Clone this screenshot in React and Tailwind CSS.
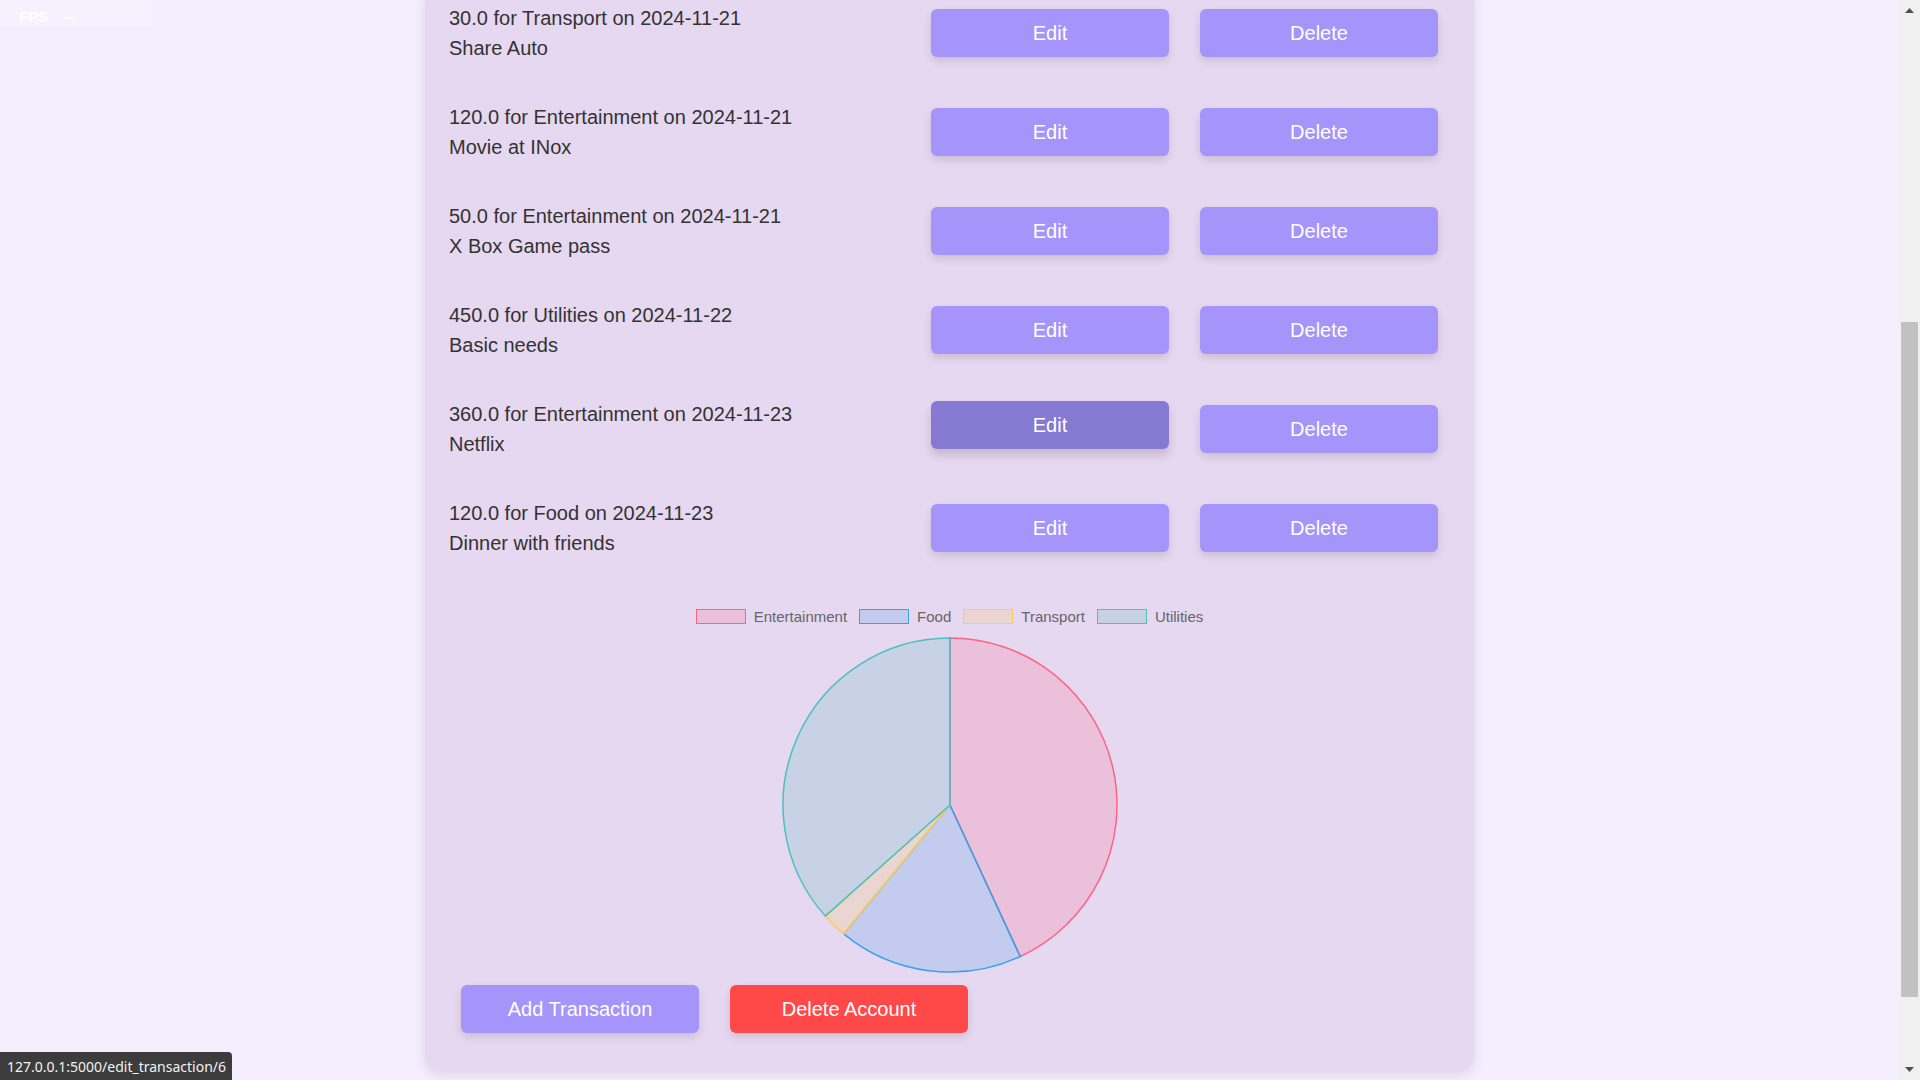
import React from "react";

const transactions = [
  { amount: "30.0", category: "Transport", date: "2024-11-21", note: "Share Auto" },
  { amount: "120.0", category: "Entertainment", date: "2024-11-21", note: "Movie at INox" },
  { amount: "50.0", category: "Entertainment", date: "2024-11-21", note: "X Box Game pass" },
  { amount: "450.0", category: "Utilities", date: "2024-11-22", note: "Basic needs" },
  { amount: "360.0", category: "Entertainment", date: "2024-11-23", note: "Netflix", hover: true },
  { amount: "120.0", category: "Food", date: "2024-11-23", note: "Dinner with friends" },
];

const slices = [
  { label: "Entertainment", value: 530, fill: "rgba(255,99,132,0.2)", stroke: "rgb(255,99,132)" },
  { label: "Food", value: 220, fill: "rgba(54,162,235,0.2)", stroke: "rgb(54,162,235)" },
  { label: "Transport", value: 30, fill: "rgba(255,205,86,0.2)", stroke: "rgb(255,205,86)" },
  { label: "Utilities", value: 450, fill: "rgba(75,192,192,0.2)", stroke: "rgb(75,192,192)" },
];

function PieChart() {
  const total = slices.reduce((s, d) => s + d.value, 0);
  const cx = 168;
  const cy = 168;
  const r = 167;
  let start = -Math.PI / 2;
  const paths = slices.map((d) => {
    const end = start + (d.value / total) * Math.PI * 2;
    const x1 = cx + r * Math.cos(start);
    const y1 = cy + r * Math.sin(start);
    const x2 = cx + r * Math.cos(end);
    const y2 = cy + r * Math.sin(end);
    const large = end - start > Math.PI ? 1 : 0;
    start = end;
    return {
      ...d,
      d: `M ${cx} ${cy} L ${x1} ${y1} A ${r} ${r} 0 ${large} 1 ${x2} ${y2} Z`,
    };
  });

  return (
    <svg width="336" height="336" viewBox="0 0 336 336">
      {paths.map((p) => (
        <path key={p.label} d={p.d} fill={p.fill} stroke={p.stroke} strokeWidth="1.5" strokeLinejoin="round" />
      ))}
    </svg>
  );
}

function Legend() {
  return (
    <div className="flex items-center justify-center gap-[12px] h-[16px] text-[15px] leading-[15px] text-[#666666]">
      {slices.map((s) => (
        <div key={s.label} className="flex items-center gap-[8px]">
          <span
            className="block w-[50px] h-[15px] border-[1.5px]"
            style={{ backgroundColor: s.fill, borderColor: s.stroke }}
          />
          <span>{s.label}</span>
        </div>
      ))}
    </div>
  );
}

function Btn({ children, hover, red }) {
  const base =
    "w-[238px] h-[48px] rounded-[6px] text-[20px] text-white flex items-center justify-center shadow-[0_4px_8px_rgba(0,0,0,0.12)]";
  let color = "bg-[#a594f9]";
  if (hover) color = "bg-[#8579d1] -translate-y-[4px] shadow-[0_6px_10px_rgba(0,0,0,0.15)]";
  if (red) color = "bg-[#ff4848]";
  return <button className={`${base} ${color}`}>{children}</button>;
}

export default function App() {
  return (
    <div
      className="relative flex h-[1080px] w-[1920px] overflow-hidden bg-[#f5eefe] text-[#333333]"
      style={{ fontFamily: '"Liberation Sans", Arial, sans-serif' }}
    >
      <div className="flex-1 overflow-hidden">
        <div className="mx-auto -mt-[16px] w-[1049px] rounded-[15px] bg-[#e6d8f0] px-[24px] pb-[38px] shadow-[0_4px_12px_rgba(0,0,0,0.1)]">
          {transactions.map((t, i) => (
            <div
              key={i}
              className="flex items-center justify-between border-b border-[#dfdce6] py-[19px]"
            >
              <div className="text-[20px] leading-[30px]">
                <div>
                  {t.amount} for {t.category} on {t.date}
                </div>
                <div>{t.note}</div>
              </div>
              <div className="mr-[12px] flex gap-[31px]">
                <Btn hover={t.hover}>Edit</Btn>
                <Btn>Delete</Btn>
              </div>
            </div>
          ))}

          <div className="mt-[30px]">
            <Legend />
          </div>
          <div className="mt-[13px] flex justify-center">
            <PieChart />
          </div>

          <div className="mt-[12px] ml-[12px] flex gap-[31px]">
            <Btn>Add Transaction</Btn>
            <Btn red>Delete Account</Btn>
          </div>
        </div>
      </div>

      {/* scrollbar */}
      <div className="flex w-[21px] flex-col bg-[#f0f0f0]">
        <div className="flex h-[21px] items-center justify-center">
          <svg width="9" height="5" viewBox="0 0 9 5">
            <path d="M0 5 L4.5 0 L9 5 Z" fill="#505050" />
          </svg>
        </div>
        <div className="h-[301px]" />
        <div className="mx-[2px] h-[675px] bg-[#c1c1c1]" />
        <div className="flex-1" />
        <div className="flex h-[21px] items-center justify-center">
          <svg width="9" height="5" viewBox="0 0 9 5">
            <path d="M0 0 L4.5 5 L9 0 Z" fill="#505050" />
          </svg>
        </div>
      </div>

      {/* fps overlay */}
      <div className="absolute left-0 top-0 h-[25px] w-[152px] bg-white/20">
        <div className="flex gap-[15px] pl-[19px] pt-[9px] text-[15px] font-bold leading-[15px] text-white">
          <span>FPS</span>
          <span className="tracking-[1px]">--</span>
        </div>
      </div>

      {/* link status bar */}
      <div
        className="absolute bottom-0 left-0 flex h-[28px] w-[232px] items-center rounded-tr-[4px] bg-[#3c3c3c] pl-[7px] text-[14px] text-[#f2f2f2]"
        style={{ fontFamily: '"Noto Sans", sans-serif' }}
      >
        127.0.0.1:5000/edit_transaction/6
      </div>
    </div>
  );
}
